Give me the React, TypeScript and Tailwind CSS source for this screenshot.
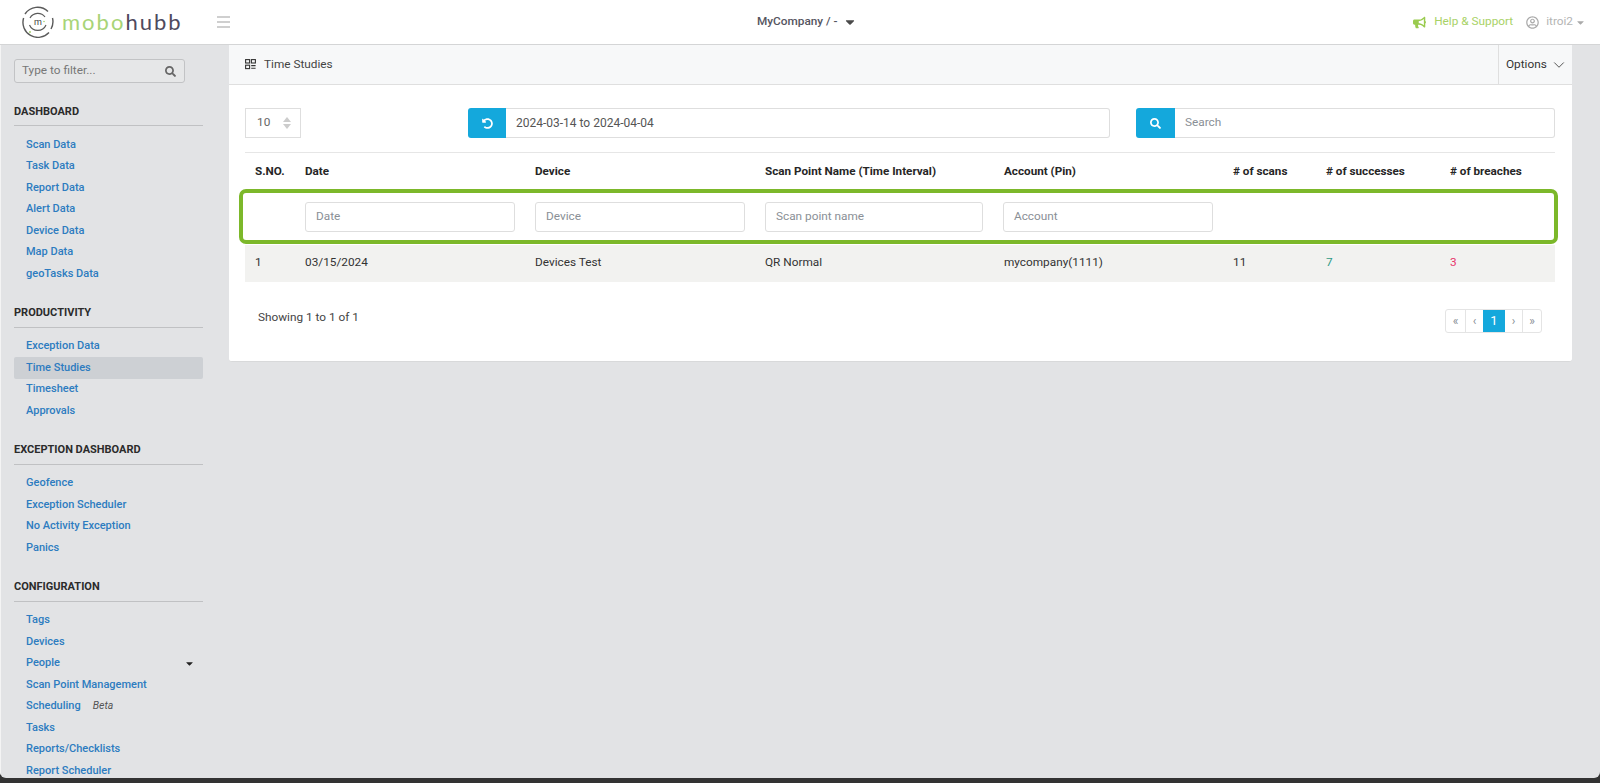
import { FaBullhorn, FaCaretDown, FaRegUserCircle, FaSearch, FaUndoAlt } from 'react-icons/fa';
import { ChevronDown } from 'lucide-react';

const sections = [
    { title: 'DASHBOARD', items: ['Scan Data', 'Task Data', 'Report Data', 'Alert Data', 'Device Data', 'Map Data', 'geoTasks Data'] },
    { title: 'PRODUCTIVITY', items: ['Exception Data', 'Time Studies', 'Timesheet', 'Approvals'] },
    { title: 'EXCEPTION DASHBOARD', items: ['Geofence', 'Exception Scheduler', 'No Activity Exception', 'Panics'] },
    { title: 'CONFIGURATION', items: ['Tags', 'Devices', 'People', 'Scan Point Management', 'Scheduling', 'Tasks', 'Reports/Checklists', 'Report Scheduler'] },
];

const columns = ['S.NO.', 'Date', 'Device', 'Scan Point Name (Time Interval)', 'Account (Pin)', '# of scans', '# of successes', '# of breaches'];

const Logo = () => (
    <div className="flex items-center">
        <svg width="32" height="32" viewBox="0 0 32 32" fill="none">
            <path d="M26 5.5A15 15 0 0 0 3 8" stroke="#5a5a5a" strokeWidth="1.4" />
            <path d="M1.6 12A15 15 0 0 0 27 26.5" stroke="#5a5a5a" strokeWidth="1.4" />
            <path d="M29 23A15 15 0 0 0 30.5 12" stroke="#5a5a5a" strokeWidth="1.4" />
            <path d="M23 11A9 9 0 0 0 8 12" stroke="#5a5a5a" strokeWidth="1.2" />
            <path d="M7.5 19A9 9 0 0 0 24 19" stroke="#5a5a5a" strokeWidth="1.2" />
            <circle cx="8" cy="26" r="1" fill="#a6d16f" />
            <circle cx="22" cy="15.5" r="0.8" fill="#a6d16f" />
            <text x="16" y="18.5" textAnchor="middle" fontSize="9" fontFamily="Roboto, sans-serif" fill="#444">m</text>
        </svg>
        <div className="ml-[8px] font-['Lato',sans-serif] font-normal text-[22px] leading-none tracking-[2px] text-[#a8d477]">
            mobo<span className="text-[#4f4a5e]">hubb</span>
        </div>
    </div>
);

const Header = () => (
    <header className="h-[45px] shrink-0 flex items-center bg-white border-b border-[#d4d5d6] relative">
        <div className="w-[230px] shrink-0 pl-[22px] flex items-center justify-between">
            <Logo />
            <div className="flex flex-col gap-[3.5px] w-[13px]">
                <div className="h-[1.5px] bg-[#cfcfcf]"></div>
                <div className="h-[1.5px] bg-[#cfcfcf]"></div>
                <div className="h-[1.5px] bg-[#cfcfcf]"></div>
            </div>
        </div>
        <div className="flex-1 flex items-center pl-[527px] text-[11.8px] font-medium text-[#55555f]">
            MyCompany / -
            <FaCaretDown className="ml-[5px] text-[#4a4a4a]" size={14} />
        </div>
        <div className="flex items-center pr-[14px] text-[11.8px]">
            <FaBullhorn className="text-[#9acb4f] mr-[8px]" size={13} />
            <span className="text-[#a8d266]">Help &amp; Support</span>
            <FaRegUserCircle className="text-[#aaaaaa] ml-[13px] mr-[7px]" size={13} />
            <span className="text-[#b4b4b4]">itroi2</span>
            <FaCaretDown className="text-[#aaaaaa] ml-[2px]" size={11} />
        </div>
    </header>
);

const Sidebar = () => (
    <aside className="w-[229px] shrink-0 border-l border-[#f4f4f4] pl-[13px] pr-[26px] pt-[14px] overflow-hidden">
        <div className="h-[24px] w-[171px] flex items-center justify-between pl-[7px] pr-[8px] border border-[#c2c3c5] rounded-[3px] bg-[#e6e7e8] text-[11.8px] text-[#777]">
            Type to filter...
            <FaSearch className="text-[#666]" size={11} />
        </div>
        {sections.map((section) => (
            <div key={section.title} className="mt-[20px]">
                <div className="h-[18px] flex items-center text-[11px] font-bold text-[#2b2b2b]">{section.title}</div>
                <div className="mt-[4px] mb-[8px] border-t border-[#c0c1c3]"></div>
                {section.items.map((item) => (
                    <div
                        key={item}
                        className={`h-[21.5px] pl-[12px] pr-[8px] flex items-center text-[11px] font-medium text-[#2d7cc0] rounded-[2px] ${item === 'Time Studies' ? 'bg-[#cdd0d4]' : ''}`}
                    >
                        {item}
                        {item === 'Scheduling' && <i className="ml-[12px] font-normal text-[10.5px] text-[#555]">Beta</i>}
                        {item === 'People' && <FaCaretDown className="ml-auto text-[#222]" size={11} />}
                    </div>
                ))}
            </div>
        ))}
    </aside>
);

const SortArrows = () => (
    <div className="flex flex-col gap-[2px]">
        <div className="w-0 h-0 border-x-[4px] border-x-transparent border-b-[5px] border-b-[#cccccc]"></div>
        <div className="w-0 h-0 border-x-[4px] border-x-transparent border-t-[5px] border-t-[#cccccc]"></div>
    </div>
);

const FilterInput = ({ placeholder, width }: { placeholder: string; width: string }) => (
    <div className={`h-[30px] flex items-center px-[10px] bg-white border border-[#dedede] rounded-[3px] text-[11.8px] text-[#8a8f96] ${width}`}>
        {placeholder}
    </div>
);

const Toolbar = () => (
    <div className="flex items-center pl-[16px] pr-[17px] pt-[23px]">
        <div className="w-[56px] h-[30px] flex items-center justify-between pl-[11px] pr-[9px] border border-[#dedede] text-[11.8px] text-[#666]">
            10
            <SortArrows />
        </div>
        <div className="ml-[167px] w-[642px] h-[30px] flex">
            <div className="w-[38px] flex items-center justify-center bg-[#14a8dc] rounded-l-[3px] text-white">
                <FaUndoAlt size={11} />
            </div>
            <div className="flex-1 flex items-center pl-[10px] border border-l-0 border-[#dedede] rounded-r-[3px] text-[12px] text-[#555]">
                2024-03-14 to 2024-04-04
            </div>
        </div>
        <div className="ml-[26px] flex-1 h-[30px] flex">
            <div className="w-[39px] flex items-center justify-center bg-[#14a8dc] rounded-l-[3px] text-white">
                <FaSearch size={11} />
            </div>
            <div className="flex-1 flex items-center pl-[10px] border border-l-0 border-[#dedede] rounded-r-[3px] text-[11.8px] text-[#8a8f96]">
                Search
            </div>
        </div>
    </div>
);

const DataTable = () => (
    <div className="relative ml-[16px] mt-[14px] mr-[17px]">
        <table className="w-full table-fixed border-t border-[#e6e6e6] text-[11.8px] text-[#333]">
            <colgroup>
                <col className="w-[50px]" />
                <col className="w-[230px]" />
                <col className="w-[230px]" />
                <col className="w-[239px]" />
                <col className="w-[229px]" />
                <col className="w-[93px]" />
                <col className="w-[124px]" />
                <col />
            </colgroup>
            <thead>
                <tr className="h-[37px]">
                    {columns.map((col) => (
                        <th key={col} className="text-left font-bold pl-[10px] pt-[1px] text-[11.7px] text-[#262626]">{col}</th>
                    ))}
                </tr>
                <tr className="h-[55px]">
                    <th></th>
                    <th className="pl-[10px] font-normal text-left"><FilterInput placeholder="Date" width="w-[210px]" /></th>
                    <th className="pl-[10px] font-normal text-left"><FilterInput placeholder="Device" width="w-[210px]" /></th>
                    <th className="pl-[10px] font-normal text-left"><FilterInput placeholder="Scan point name" width="w-[218px]" /></th>
                    <th className="pl-[9px] font-normal text-left"><FilterInput placeholder="Account" width="w-[210px]" /></th>
                    <th colSpan={3}></th>
                </tr>
            </thead>
            <tbody>
                <tr className="h-[37px] bg-[#f2f2f0]">
                    <td className="pl-[10px]">1</td>
                    <td className="pl-[10px]">03/15/2024</td>
                    <td className="pl-[10px]">Devices Test</td>
                    <td className="pl-[10px]">QR Normal</td>
                    <td className="pl-[10px]">mycompany(1111)</td>
                    <td className="pl-[10px]">11</td>
                    <td className="pl-[10px] text-[#2f9a86]">7</td>
                    <td className="pl-[10px] text-[#e8346a]">3</td>
                </tr>
            </tbody>
        </table>
        {/* highlight drawn over the filter row */}
        <div className="absolute left-[-6px] right-[-3px] top-[37px] h-[55px] border-[4px] border-[#7cb82a] rounded-[7px]"></div>
    </div>
);

const Pagination = () => (
    <div className="flex h-[24px] border border-[#e4e4e4] rounded-[3px] text-[12px] text-[#888e94]">
        <div className="w-[20px] flex items-center justify-center border-r border-[#e4e4e4]">«</div>
        <div className="w-[17px] flex items-center justify-center">‹</div>
        <div className="w-[22px] flex items-center justify-center bg-[#14a8dc] text-white text-[13px]">1</div>
        <div className="w-[18px] flex items-center justify-center border-r border-[#e4e4e4]">›</div>
        <div className="w-[18px] flex items-center justify-center">»</div>
    </div>
);

const TimeStudiesIcon = () => (
    <svg width="11" height="11" viewBox="0 0 11 11" fill="none" stroke="#333" strokeWidth="1.1">
        <rect x="0.6" y="0.6" width="4" height="3.4" />
        <rect x="6.4" y="0.6" width="4" height="3.4" />
        <rect x="0.6" y="6.2" width="4" height="3.4" />
        <path d="M6.2 6.6h4.4M6.2 9.2h4.4" />
    </svg>
);

const Main = () => (
    <main className="flex-1 pr-[28px]">
        <section className="h-[317px] bg-white rounded-b-[3px] border-b border-[#d8d9da]">
            <div className="h-[40px] flex items-center justify-between bg-[#f7f8f9] border-b border-[#dfdfdf]">
                <div className="flex items-center pl-[16px] text-[11.8px] text-[#444]">
                    <TimeStudiesIcon />
                    <span className="ml-[8px]">Time Studies</span>
                </div>
                <div className="h-full w-[74px] flex items-center justify-between pl-[7px] pr-[4px] border-l border-[#dfdfdf] text-[11.8px] text-[#333]">
                    Options
                    <ChevronDown size={18} strokeWidth={1.1} />
                </div>
            </div>
            <Toolbar />
            <DataTable />
            <div className="mt-[27px] pl-[29px] pr-[30px] flex items-center justify-between text-[11.8px] text-[#444]">
                <span className="mt-[-6px]">Showing 1 to 1 of 1</span>
                <Pagination />
            </div>
        </section>
    </main>
);

export default function App() {
    return (
        <div className="h-[783px] w-[1600px] bg-[#333333] overflow-hidden font-['Roboto',sans-serif]">
            <div className="h-[778px] flex flex-col bg-[#e2e3e5] rounded-b-[6px] overflow-hidden">
                <Header />
                <div className="flex-1 flex min-h-0">
                    <Sidebar />
                    <Main />
                </div>
            </div>
        </div>
    );
}
